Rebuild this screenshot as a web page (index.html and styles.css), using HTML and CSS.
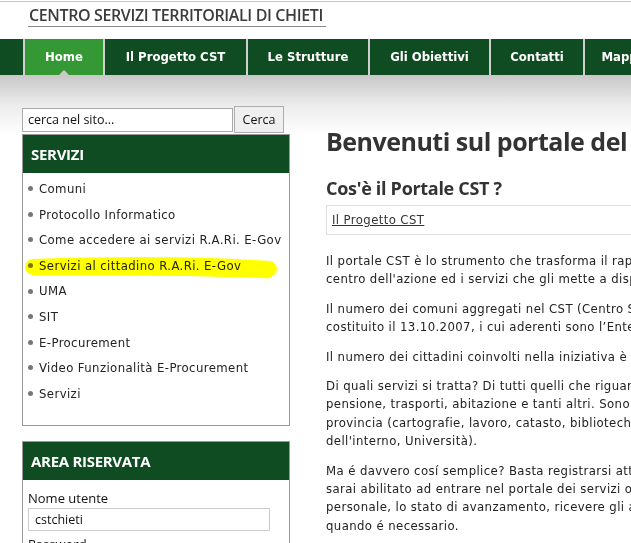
FILE: index.html
```html
<!DOCTYPE html>
<html lang="it">
<head>
<meta charset="utf-8">
<title>Centro Servizi Territoriali di Chieti</title>
<link rel="stylesheet" href="styles.css">
</head>
<body>
<div class="page">
  <header class="site-header">
    <div class="site-title">CENTRO SERVIZI TERRITORIALI DI CHIETI</div>
  </header>
  <nav class="main-nav">
    <ul class="tabs">
      <li class="tab active"><a href="#">Home</a></li>
      <li class="tab"><a href="#">Il Progetto CST</a></li>
      <li class="tab"><a href="#">Le Strutture</a></li>
      <li class="tab"><a href="#">Gli Obiettivi</a></li>
      <li class="tab"><a href="#">Contatti</a></li>
      <li class="tab"><a href="#">Mappa del sito</a></li>
    </ul>
  </nav>
  <div class="main">
    <aside class="sidebar">
      <form class="search">
        <input class="search-input" type="text" value="cerca nel sito...">
        <button class="search-btn" type="button">Cerca</button>
      </form>
      <section class="box">
        <h3 class="box-title">SERVIZI</h3>
        <ul class="menu">
          <li><a href="#">Comuni</a></li>
          <li><a href="#">Protocollo Informatico</a></li>
          <li><a href="#">Come accedere ai servizi R.A.Ri. E-Gov</a></li>
          <li><a href="#">Servizi al cittadino R.A.Ri. E-Gov</a></li>
          <li><a href="#">UMA</a></li>
          <li><a href="#">SIT</a></li>
          <li><a href="#">E-Procurement</a></li>
          <li><a href="#">Video Funzionalità E-Procurement</a></li>
          <li><a href="#">Servizi</a></li>
        </ul>
      </section>
      <section class="box login">
        <h3 class="box-title">AREA RISERVATA</h3>
        <div class="login-body">
          <label class="login-label">Nome utente</label>
          <input class="login-input" type="text" value="cstchieti">
          <label class="login-label">Password</label>
          <input class="login-input" type="password" value="">
        </div>
      </section>
      <svg class="highlight" width="262" height="30" viewBox="0 0 262 30">
        <path d="M8 12 C 70 10, 160 8, 244 14" stroke="#ffff00" stroke-width="16" stroke-linecap="round" fill="none"/>
        <path d="M10 16 C 90 16, 170 15, 243 19" stroke="#ffff00" stroke-width="9" stroke-linecap="round" fill="none"/>
      </svg>
    </aside>
    <main class="content">
      <h1 class="page-title">Benvenuti sul portale del CST di Chieti</h1>
      <h2 class="section-title">Cos'è il Portale CST ?</h2>
      <div class="links-box"><a href="#">Il Progetto CST</a></div>
      <p>Il portale CST è lo strumento che trasforma il rapporto con l'Ente, ponendo il cittadino al centro dell'azione ed i servizi che gli mette a disposizione.</p>
      <p>Il numero dei comuni aggregati nel CST (Centro Servizi Territoriali) della provincia è 104, costituito il 13.10.2007, i cui aderenti sono l’Ente Provincia di Chieti e i Comuni.</p>
      <p>Il numero dei cittadini coinvolti nella iniziativa è 169.000 circa.</p>
      <p>Di quali servizi si tratta? Di tutti quelli che riguardano la vita di tutti i giorni: anagrafe, pensione, trasporti, abitazione e tanti altri. Sono disponibili anche i servizi offerti dalla provincia (cartografie, lavoro, catasto, biblioteche) e da altri enti (Inps, Inail, Ministero dell'interno, Università).</p>
      <p>Ma é davvero cosí semplice? Basta registrarsi attraverso il modulo online e, una volta fatto, sarai abilitato ad entrare nel portale dei servizi online dove potrai controllare la pratica personale, lo stato di avanzamento, ricevere gli avvisi e comunicare con gli uffici comunali quando é necessario.</p>
    </main>
  </div>
</div>
</body>
</html>
```

FILE: styles.css
```css
html, body {
  margin: 0;
  padding: 0;
  background: #fff;
  overflow: hidden;
}
body {
  font-family: "DejaVu Sans Condensed", "DejaVu Sans", sans-serif;
  font-size: 13px;
  letter-spacing: 0.4px;
  color: #222;
}
.page {
  width: 960px;
  border-top: 1px solid #c8c8c8;
  margin-top: 1px;
}
.site-header {
  height: 37px;
  padding-left: 28px;
}
.site-title {
  display: inline-block;
  font-family: "Open Sans", sans-serif;
  font-weight: 600;
  font-size: 16px;
  color: #3c3c3c;
  line-height: 20px;
  padding: 3px 3px 1px 1px;
  border-bottom: 1px solid #888;
  letter-spacing: -0.37px;
}
.main-nav {
  background: #0f4c21;
  height: 36px;
  padding-left: 23px;
}
.tabs {
  list-style: none;
  margin: 0;
  padding: 0;
  display: flex;
  height: 36px;
  border-left: 2px solid #cfcfcf;
}
.tab {
  border-right: 2px solid #cfcfcf;
  position: relative;
}
.tab a {
  display: block;
  height: 36px;
  line-height: 36px;
  color: #fff;
  text-decoration: none;
  font-weight: bold;
  font-size: 13px;
  letter-spacing: 0;
  text-align: center;
}
.tab:nth-child(1) a { width: 78px; }
.tab:nth-child(2) a { width: 141px; }
.tab:nth-child(3) a { width: 120px; }
.tab:nth-child(4) a { width: 119px; }
.tab:nth-child(5) a { width: 92px; }
.tab:nth-child(6) a { width: 130px; }
.tab.active a { background: #349934; }
.tab.active::after {
  content: "";
  position: absolute;
  left: 34px;
  bottom: 0;
  border-left: 5px solid transparent;
  border-right: 5px solid transparent;
  border-bottom: 5px solid #cacaca;
}
.main {
  display: flex;
  background: linear-gradient(#c8c8c8 0, #ececec 30px, #fff 60px) no-repeat;
  padding-left: 22px;
}
.sidebar {
  width: 268px;
  flex: none;
  position: relative;
  padding-top: 31px;
}
.search {
  display: flex;
  align-items: center;
  height: 27px;
  margin: 0 0 1px 0;
}
.search-input {
  box-sizing: border-box;
  width: 211px;
  height: 24px;
  border: 1px solid #a9a9a9;
  padding: 0 5px;
  font-family: "Open Sans", sans-serif;
  font-size: 12.5px;
  color: #111;
  background: #fff;
  margin: 0;
}
.search-btn {
  box-sizing: border-box;
  width: 50px;
  height: 27px;
  margin: 0 0 0 1px;
  border: 1px solid #adadad;
  background: #efefef;
  font-family: "Open Sans", sans-serif;
  font-size: 12.5px;
  color: #111;
  padding: 0;
}
.box {
  border: 1px solid #999;
  background: #fff;
}
.box-title {
  margin: 0;
  background: #0f4c21;
  color: #fff;
  font-family: "Open Sans", sans-serif;
  font-weight: bold;
  font-size: 15px;
  height: 38px;
  line-height: 38px;
  padding-left: 8px;
  letter-spacing: -0.3px;
}
.menu {
  list-style: none;
  margin: 0;
  padding: 3px 0 18.6px 5px;
}
.menu li {
  height: 25.6px;
  line-height: 25.6px;
  display: flex;
  align-items: center;
}
.menu li::before {
  content: "";
  width: 5px;
  height: 5px;
  border-radius: 50%;
  background: #777;
  margin-right: 6px;
  flex: none;
}
.menu a {
  color: #222;
  text-decoration: none;
}
.login {
  margin-top: 15px;
}
.login-body {
  padding: 9px 5px 0 5px;
}
.login-label {
  display: block;
  font-family: "Open Sans", sans-serif;
  font-size: 13px;
  line-height: 18px;
  letter-spacing: 0;
  color: #111;
}
.login-input {
  box-sizing: border-box;
  display: block;
  width: 242px;
  height: 23px;
  border: 1px solid #ccc;
  margin: 1px 0 4px 0;
  padding: 0 6px;
  font-family: "Open Sans", sans-serif;
  font-size: 12.5px;
  color: #111;
}
.highlight {
  position: absolute;
  left: 3px;
  top: 180px;
  mix-blend-mode: multiply;
}
.content {
  flex: none;
  width: 590px;
  padding-left: 36px;
  padding-top: 50px;
}
.page-title {
  margin: 0;
  font-family: "Open Sans", sans-serif;
  font-weight: bold;
  font-size: 25px;
  line-height: 32px;
  color: #333;
  white-space: nowrap;
  letter-spacing: -0.5px;
}
.section-title {
  margin: 20px 0 6px 0;
  font-family: "Open Sans", sans-serif;
  font-weight: bold;
  font-size: 18px;
  line-height: 22px;
  color: #333;
  letter-spacing: -0.3px;
}
.links-box {
  border: 1px solid #ddd;
  height: 28px;
  line-height: 28px;
  padding-left: 5px;
}
.links-box a {
  color: #333;
  text-decoration: underline;
}
.content p {
  margin: 11px 0 0 0;
  line-height: 18.4px;
  color: #222;
}
.content p:first-of-type {
  margin-top: 17px;
}
```
